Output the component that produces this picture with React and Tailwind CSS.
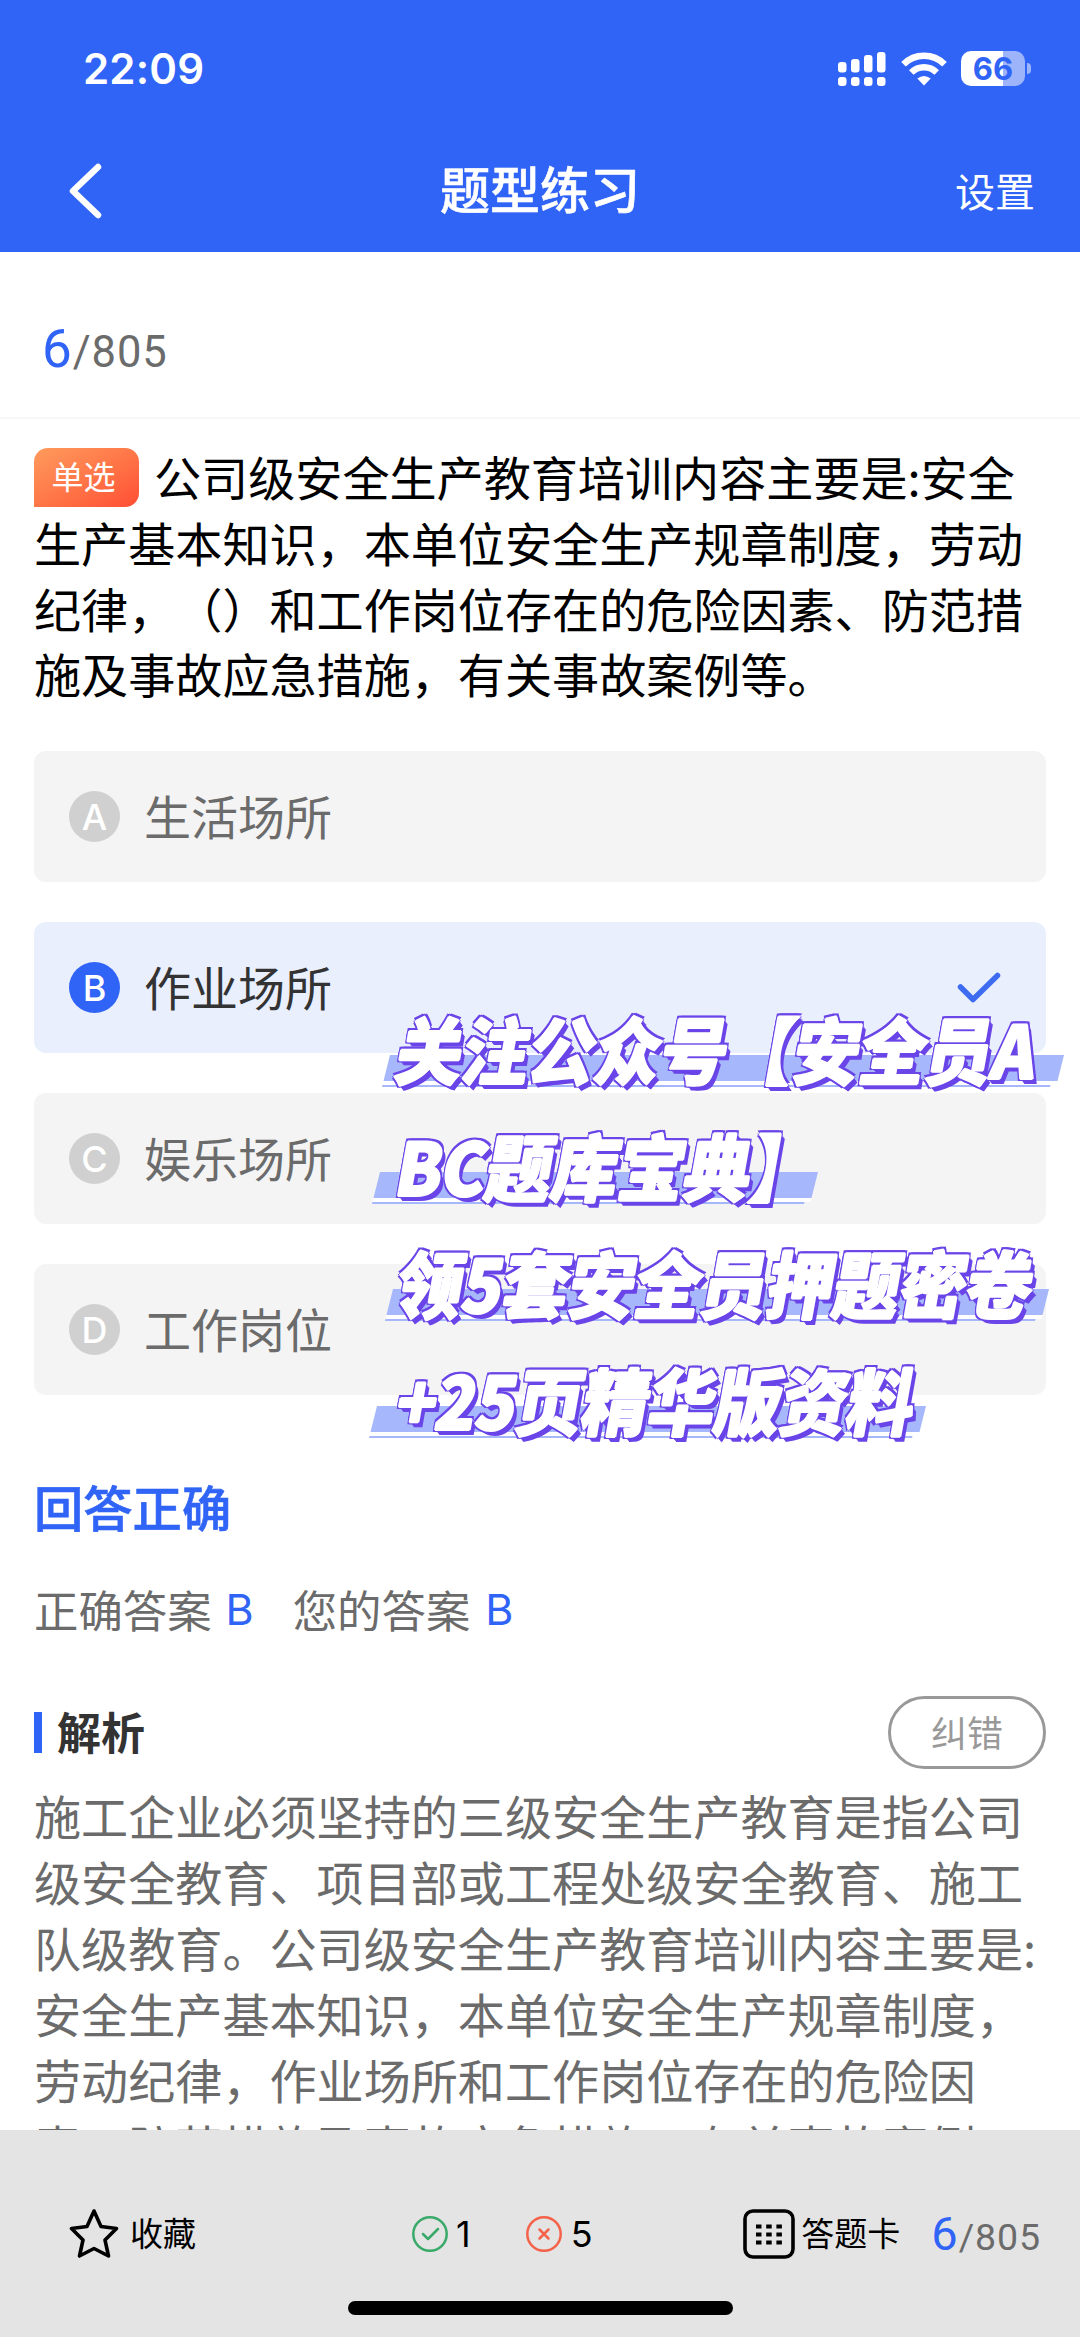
import clsx from 'clsx';

const options = [
  { key: 'A', text: '生活场所' },
  { key: 'B', text: '作业场所' },
  { key: 'C', text: '娱乐场所' },
  { key: 'D', text: '工作岗位' }
];

const questionLines = [
  '公司级安全生产教育培训内容主要是:安全',
  '生产基本知识，本单位安全生产规章制度，劳动',
  '纪律，（）和工作岗位存在的危险因素、防范措',
  '施及事故应急措施，有关事故案例等。'
];

const analysisLines = [
  '施工企业必须坚持的三级安全生产教育是指公司',
  '级安全教育、项目部或工程处级安全教育、施工',
  '队级教育。公司级安全生产教育培训内容主要是:',
  '安全生产基本知识，本单位安全生产规章制度，',
  '劳动纪律，作业场所和工作岗位存在的危险因',
  '素、防范措施及事故应急措施，有关事故案例'
];

const promoLines = [
  { text: '关注公众号【安全员A', bar: 'ml-[16px] w-[674px]' },
  { text: 'BC题库宝典】', bar: 'ml-[6px] w-[438px]' },
  { text: '领5套安全员押题密卷', bar: 'ml-[19px] w-[656px]' },
  { text: '+25页精华版资料', bar: 'ml-[3px] w-[549px]' }
];

function StatusBar() {
  return (
    <div className="flex h-[137px] items-center justify-between pr-[49px] pl-[83px]">
      <span className="font-['Inter',sans-serif] text-[42px] leading-none font-semibold tracking-[0.200px] text-white">22:09</span>
      <div className="flex items-center">
        <svg width="49" height="36" viewBox="0 0 49 36" fill="#fff">
          <rect x="0" y="11" width="8.5" height="10.500" rx="3" />
          <rect x="13" y="8" width="8.5" height="13.500" rx="3" />
          <rect x="26" y="4" width="8.5" height="17.500" rx="3" />
          <rect x="39" y="1" width="8.5" height="20.500" rx="3" />
          <rect x="0" y="26" width="8.5" height="9" rx="3" />
          <rect x="13" y="26" width="8.5" height="9" rx="3" />
          <rect x="26" y="26" width="8.5" height="9" rx="3" />
          <rect x="39" y="26" width="8.5" height="9" rx="3" />
        </svg>
        <svg className="ml-[14px]" width="46" height="34" viewBox="0 0 46 34" fill="none" stroke="#fff" strokeWidth="6.5">
          <path d="M2.500 12.300A29 29 0 0 1 43.500 12.300" />
          <path d="M10.300 20.500A18 18 0 0 1 35.700 20.500" />
          <path d="M23 33.500L16.300 26.500Q23 21.500 29.700 26.500Z" fill="#fff" stroke="none" />
        </svg>
        <div className="ml-[14px] flex h-[35px] w-[64px] items-center justify-center rounded-[10px] bg-linear-to-r from-white from-[66%] to-[#9db4fb] to-[66%]">
          <span className="font-['Inter',sans-serif] text-[31px] leading-none font-bold text-[#3064f6]">66</span>
        </div>
        <div className="ml-[2px] h-[11px] w-[4px] rounded-r-full bg-[#9db4fb]" />
      </div>
    </div>
  );
}

function Header() {
  return (
    <header className="h-[252px] shrink-0 bg-[#3064f6] text-white">
      <StatusBar />
      <div className="grid h-[108px] grid-cols-3 items-center pr-[45px] pl-[68px]">
        <svg width="36" height="56" viewBox="0 0 36 56" fill="none" stroke="#fff" strokeWidth="6.5" strokeLinecap="round" strokeLinejoin="round">
          <path d="M30 4L5 28L30 52" />
        </svg>
        <h1 className="-ml-[23px] pb-[8px] text-center text-[50px] leading-none font-medium whitespace-nowrap [-webkit-text-stroke:0.600px_#fff]">题型练习</h1>
        <button className="justify-self-end pb-[3px] text-[40px] leading-none">设置</button>
      </div>
    </header>
  );
}

function Counter({ small }) {
  return (
    <span className={clsx("font-['Roboto',sans-serif] leading-none tracking-[0.900px] text-[#6b6b6b]", small ? 'text-[37.500px]' : 'text-[43.500px]')}>
      <span className={clsx('text-[#3064f6]', small ? 'text-[47px]' : 'text-[53px]')}>6</span>/805
    </span>
  );
}

function Option({ option, selected }) {
  return (
    <li className={clsx('flex h-[131px] items-center rounded-[12px] pr-[45px] pl-[35px]', selected ? 'bg-[#eaeffe]' : 'bg-[#f4f4f4]')}>
      <span className={clsx("flex size-[51px] items-center justify-center rounded-full font-['Inter',sans-serif] text-[36px] leading-none font-medium text-white", selected ? 'bg-[#3064f6]' : 'bg-[#d0d0d0]')}>{option.key}</span>
      <span className={clsx('ml-[24px] pb-[5px] text-[47px] leading-none', selected ? 'text-[#333]' : 'text-[#6b6b6b]')}>{option.text}</span>
      {selected && (
        <svg className="ml-auto" width="44" height="32" viewBox="0 0 44 32" fill="none" stroke="#3d6cf0" strokeWidth="5.5" strokeLinecap="round" strokeLinejoin="round">
          <path d="M3.500 15L16 27.500L40.500 3.500" />
        </svg>
      )}
    </li>
  );
}

// White fill fattened by 1px, a thin purple outline, then the drop towards the bottom right
function Promo() {
  return (
    <div className="absolute top-[994px] left-[370px]">
      {promoLines.map((line) => (
        <div key={line.text} className="relative h-[117px]">
          <div className={clsx('absolute top-[61px] -skew-x-[14deg]', line.bar)}>
            <div className="h-[26px] bg-[#a6b7fb]" />
            <div className="h-[4px] bg-white" />
            <div className="mr-[6px] h-[2px] bg-[#a6b7fb]" />
          </div>
          <p className="relative -top-[6px] ml-[28px] w-max scale-y-[1.09] -skew-x-[11deg] text-[67px] leading-[117px] font-black tracking-[-0.800px] whitespace-nowrap text-white [text-shadow:1px_0_0_#fff,-1px_0_0_#fff,0_1px_0_#fff,0_-1px_0_#fff,-2px_0_0_#6a45e8,2px_0_0_#6a45e8,0_-2px_0_#6a45e8,0_2px_0_#6a45e8,-2px_-2px_0_#6a45e8,2px_-2px_0_#6a45e8,-2px_2px_0_#6a45e8,2px_2px_0_#6a45e8,3px_3px_0_#6a45e8,4px_4px_0_#6a45e8,5px_5px_0_#6a45e8]">{line.text}</p>
        </div>
      ))}
    </div>
  );
}

function Footer() {
  return (
    <footer className="h-[207px] shrink-0 bg-[#e4e4e4] text-black">
      <div className="flex h-[171px] items-center pt-[36px] pr-[39px] pl-[69px]">
        <svg width="50" height="51" viewBox="0 0 50 51" fill="none" stroke="#000" strokeWidth="3.600" strokeLinejoin="round">
          <path d="M25 3L32 18.500L47.500 20.500L36 32L39.500 48L25 40.500L10.500 48L14 32L2.500 20.500L18 18.500Z" />
        </svg>
        <span className="ml-[11px] pb-[3px] text-[33px] leading-none">收藏</span>
        <svg className="ml-[215px]" width="38" height="38" viewBox="0 0 38 38" fill="none" stroke="#3aaa6a" strokeWidth="2.500" strokeLinecap="round" strokeLinejoin="round">
          <circle cx="19" cy="19" r="16.700" />
          <path d="M12 19L17 24L27 14" />
        </svg>
        <span className="ml-[7px] font-['Inter',sans-serif] text-[36px] leading-none">1</span>
        <svg className="ml-[54px]" width="38" height="38" viewBox="0 0 38 38" fill="none" stroke="#f4624a" strokeWidth="2.500" strokeLinecap="round">
          <circle cx="19" cy="19" r="16.700" />
          <path d="M14.500 14.500L23.500 23.500M23.500 14.500L14.500 23.500" />
        </svg>
        <span className="ml-[8px] font-['Inter',sans-serif] text-[36px] leading-none">5</span>
        <div className="ml-auto flex items-center">
          <svg width="52" height="50" viewBox="0 0 52 50">
            <rect x="2" y="2" width="48" height="46" rx="8" fill="none" stroke="#000" strokeWidth="3.600" />
            <path d="M13 17.500h26M13 25.500h26M13 33.500h26" stroke="#000" strokeWidth="4" strokeDasharray="5.500 4.700" />
          </svg>
          <span className="ml-[6px] pb-[3px] text-[33px] leading-none">答题卡</span>
          <span className="ml-[31px]"><Counter small /></span>
        </div>
      </div>
      <div className="mx-auto h-[14px] w-[385px] rounded-full bg-black" />
    </footer>
  );
}

export default function App() {
  return (
    <div className="relative flex h-[2337px] w-[1080px] flex-col overflow-hidden bg-white font-['Noto_Sans_CJK_SC',sans-serif] [text-spacing-trim:space-all]">
      <Header />
      <main className="min-h-0 flex-1 overflow-hidden">
        <div className="flex h-[167px] items-center border-b-2 border-[#f7f7f7] pt-[29px] pl-[42px]">
          <Counter />
        </div>

        <section className="px-[34px] pt-[24px]">
          <div className="text-[47.100px] leading-[65.800px] whitespace-nowrap text-black">
            <div className="flex items-center">
              <span className="mt-[4px] flex h-[59px] w-[105px] items-center justify-center rounded-[14px] rounded-bl-none bg-linear-to-br from-[#ff9a5c] to-[#ff4c34] pr-[6px] pb-[5px] text-[32px] leading-none text-white">单选</span>
              <span className="ml-[15px]">{questionLines[0]}</span>
            </div>
            {questionLines.slice(1).map((line) => <p key={line}>{line}</p>)}
          </div>

          <ul className="mt-[45px] flex flex-col gap-[40px]">
            {options.map((option) => <Option key={option.key} option={option} selected={option.key === 'B'} />)}
          </ul>

          <h2 className="mt-[86px] text-[49.300px] leading-none font-medium text-[#3064f6] [-webkit-text-stroke:0.600px_#3064f6]">回答正确</h2>
          <div className="mt-[57px] flex items-center text-[44.400px] leading-none text-[#6b6b6b]">
            <span>正确答案</span>
            <span className="ml-[14px] font-['Inter',sans-serif] text-[43px] text-[#3064f6]">B</span>
            <span className="ml-[39px]">您的答案</span>
            <span className="ml-[15px] font-['Inter',sans-serif] text-[43px] text-[#3064f6]">B</span>
          </div>

          <div className="mt-[64px] flex h-[74px] items-center">
            <div className="h-[41px] w-[8px] bg-[#3064f6]" />
            <h3 className="ml-[15px] pb-[3px] text-[44px] leading-none font-bold text-[#333]">解析</h3>
            <button className="ml-auto h-[73px] w-[158px] rounded-full border-3 border-[#999] pb-[3px] text-[36px] leading-none text-[#999]">纠错</button>
          </div>
          <div className="mt-[12px] text-[47.100px] leading-[66px] whitespace-nowrap text-[#6b6b6b]">
            {analysisLines.map((line) => <p key={line}>{line}</p>)}
          </div>
        </section>
      </main>
      <Footer />
      <Promo />
    </div>
  );
}
